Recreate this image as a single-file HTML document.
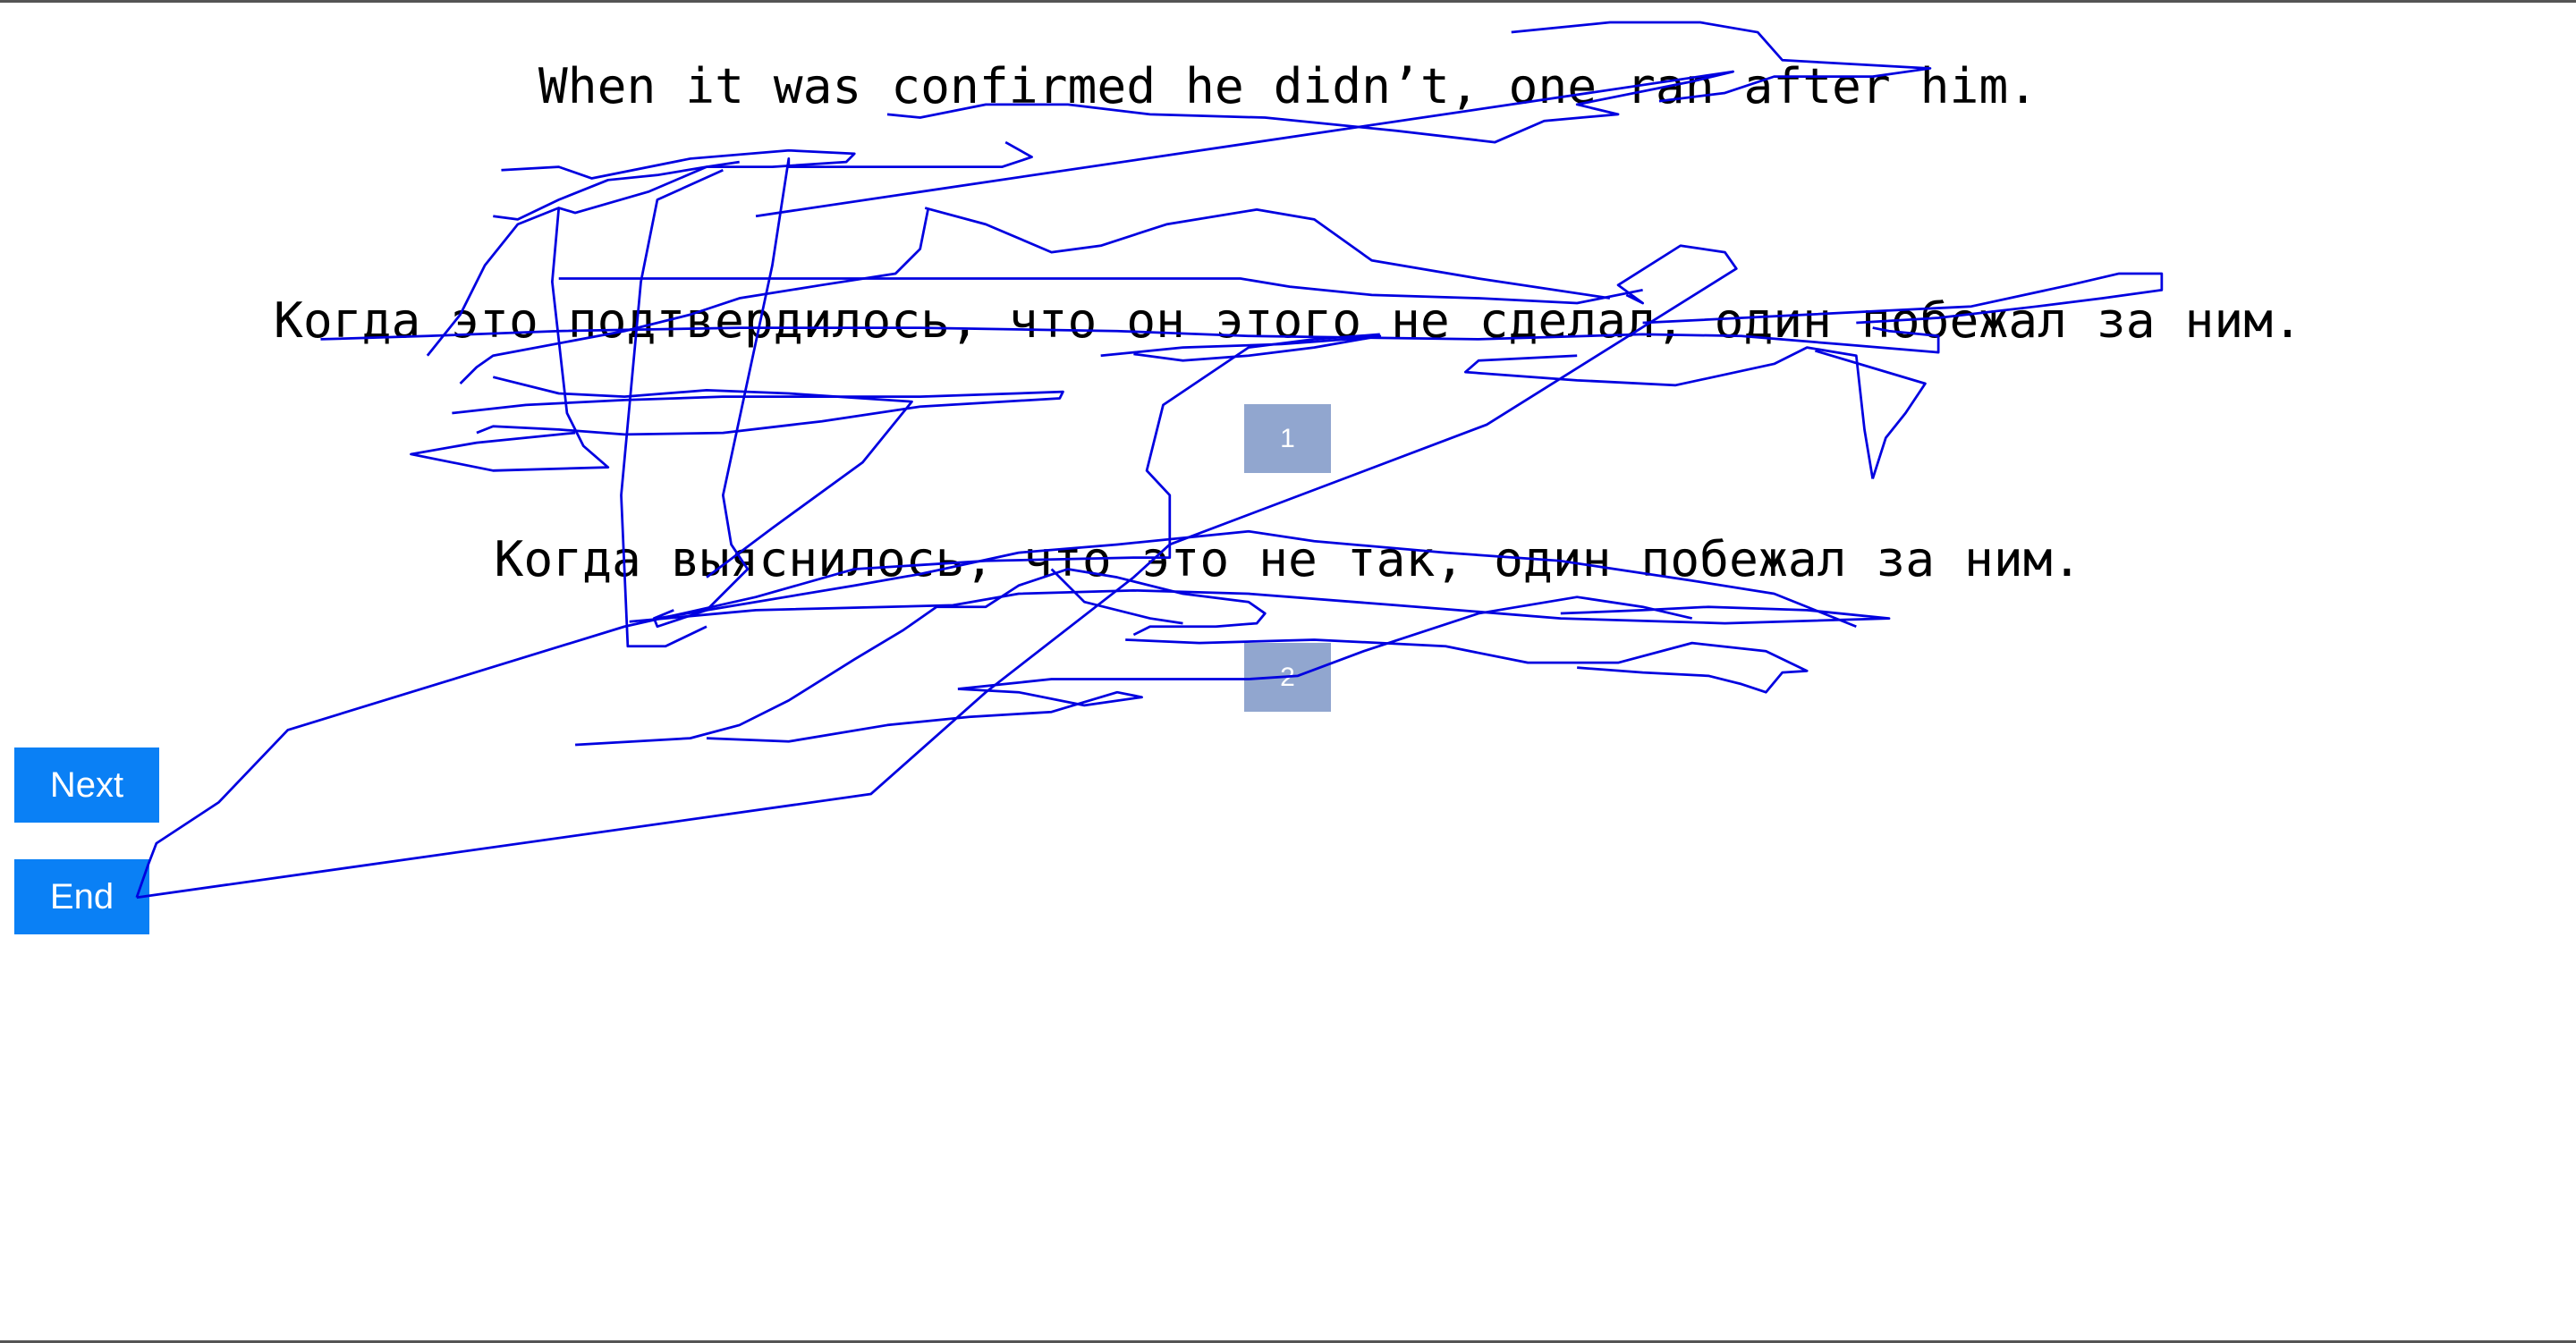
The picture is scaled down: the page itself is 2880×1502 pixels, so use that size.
<!DOCTYPE html>
<html><head><meta charset="utf-8"><style>
html,body{margin:0;padding:0;width:2880px;height:1502px;overflow:hidden;background:#fff;}
body{position:relative;border-top:3px solid #555;border-bottom:3px solid #555;box-sizing:border-box;}
.t{position:absolute;left:0;width:2880px;text-align:center;font-family:"DejaVu Sans Mono","Liberation Mono",monospace;font-size:54.6px;color:#000;white-space:pre;line-height:1;}
.b{position:absolute;background:#91a6cf;color:#fff;font-family:"Liberation Sans",sans-serif;font-size:30px;display:flex;align-items:center;justify-content:center;}
.btn{position:absolute;background:#0a80f5;color:#fff;font-family:"Liberation Sans",sans-serif;font-size:40px;display:flex;align-items:center;justify-content:center;}
svg{position:absolute;left:0;top:0;}
</style></head><body>
<div class="t" style="top:66px">When it was confirmed he didn’t, one ran after him.</div>
<div class="t" style="top:328px">Когда это подтвердилось, что он этого не сделал, один побежал за ним.</div>
<div class="t" style="top:595px">Когда выяснилось, что это не так, один побежал за ним.</div>
<div class="b" style="left:1391px;top:449px;width:97px;height:77px">1</div>
<div class="b" style="left:1391px;top:716px;width:97px;height:77px">2</div>
<div class="btn" style="left:16px;top:833px;width:162px;height:84px">Next</div>
<div class="btn" style="left:16px;top:958px;width:151px;height:84px">End</div>
<svg width="2880" height="1502" viewBox="0 0 1568 818" fill="none" stroke="#0000e0" stroke-width="1.5" stroke-linejoin="round">
<polyline points="83,545 530,482 600,420 690,350 712,330 905,257 1057,162 1050,152 1023,148 985,172 1000,183 990,178"/>
<polyline points="83,545 90,525 95,512 133,487 175,443 380,380 460,362 520,345 600,340 690,338 712,338 712,300 698,285 708,245 760,210 800,205 840,202"/>
<polyline points="460,130 1055,42 1030,48 960,62 985,68 940,72 910,85 850,78 770,70 700,68 650,62 600,62 560,70 540,68"/>
<polyline points="920,18 980,12 1035,12 1070,18 1085,35 1175,40 1140,45 1080,45 1050,55 1010,60"/>
<polyline points="305,102 340,100 360,107 420,95 480,90 520,92 515,97 470,100 430,100 395,115 350,128 340,125 336,170 345,250 355,270 370,283 300,285 250,275 290,268 350,262"/>
<polyline points="612,85 628,94 610,100 480,100 480,95 470,160 455,230 440,300 445,330 455,345 430,370 400,380 398,375 410,370"/>
<polyline points="440,102 400,120 390,170 378,300 382,392 405,392 430,380"/>
<polyline points="300,130 315,132 340,120 370,108 400,105 430,100 450,97"/>
<polyline points="260,215 280,190 295,160 315,135 340,125"/>
<polyline points="340,168 755,168 785,173 835,178 900,180 960,183 1000,175"/>
<polyline points="565,125 560,150 545,165 500,172 450,180 420,190 380,200 300,215 290,222 280,232"/>
<polyline points="563,125 600,135 640,152 670,148 710,135 765,126 800,132 835,157 900,168 980,180"/>
<polyline points="195,205 260,203 340,200 450,198 560,198 680,200 760,203 900,205 1000,202 1060,203 1120,208 1180,213 1180,203 1150,200 1140,198"/>
<polyline points="1140,290 1135,260 1130,215 1100,210 1080,220 1020,233 960,230 892,225 900,218 960,215"/>
<polyline points="1105,212 1172,232 1160,250 1148,265 1140,290"/>
<polyline points="1000,195 1100,190 1200,185 1260,172 1290,165 1316,165 1316,175 1280,180 1240,185 1180,192 1130,195"/>
<polyline points="300,228 340,238 380,240 430,236 480,238 555,243 525,280 470,320 430,350"/>
<polyline points="275,250 320,245 380,242 440,240 500,240 560,240 647,237 645,241 560,246 500,255 440,262 380,263 340,260 300,258 290,262"/>
<polyline points="670,215 720,210 780,208 820,205 840,203 800,210 760,215 720,218 690,214"/>
<polyline points="383,377 460,370 580,367 620,360 690,358 760,360 850,367 950,375 1050,378 1150,375 1100,370 1040,368 1000,370 950,372"/>
<polyline points="400,375 520,355 560,348 620,335 680,330 760,322 800,328 880,335 950,340 1030,352 1080,360 1130,380"/>
<polyline points="350,452 420,448 450,440 480,425 520,400 550,382 570,368 600,368 620,355 650,345 680,350 720,360 760,365 770,372 765,378 740,380 700,380 690,385"/>
<polyline points="685,388 730,390 800,388 880,392 930,402 985,402 1030,390 1075,395 1100,407 1085,408 1075,420 1060,415 1040,410 1000,408 960,405"/>
<polyline points="583,418 640,412 700,412 760,412 790,410 830,395 900,372 960,362 1000,368 1030,375"/>
<polyline points="583,418 620,420 660,428 695,423 680,420 640,432 590,435 540,440 480,450 430,448"/>
<polyline points="640,345 660,365 700,375 720,378"/>
</svg>
</body></html>
